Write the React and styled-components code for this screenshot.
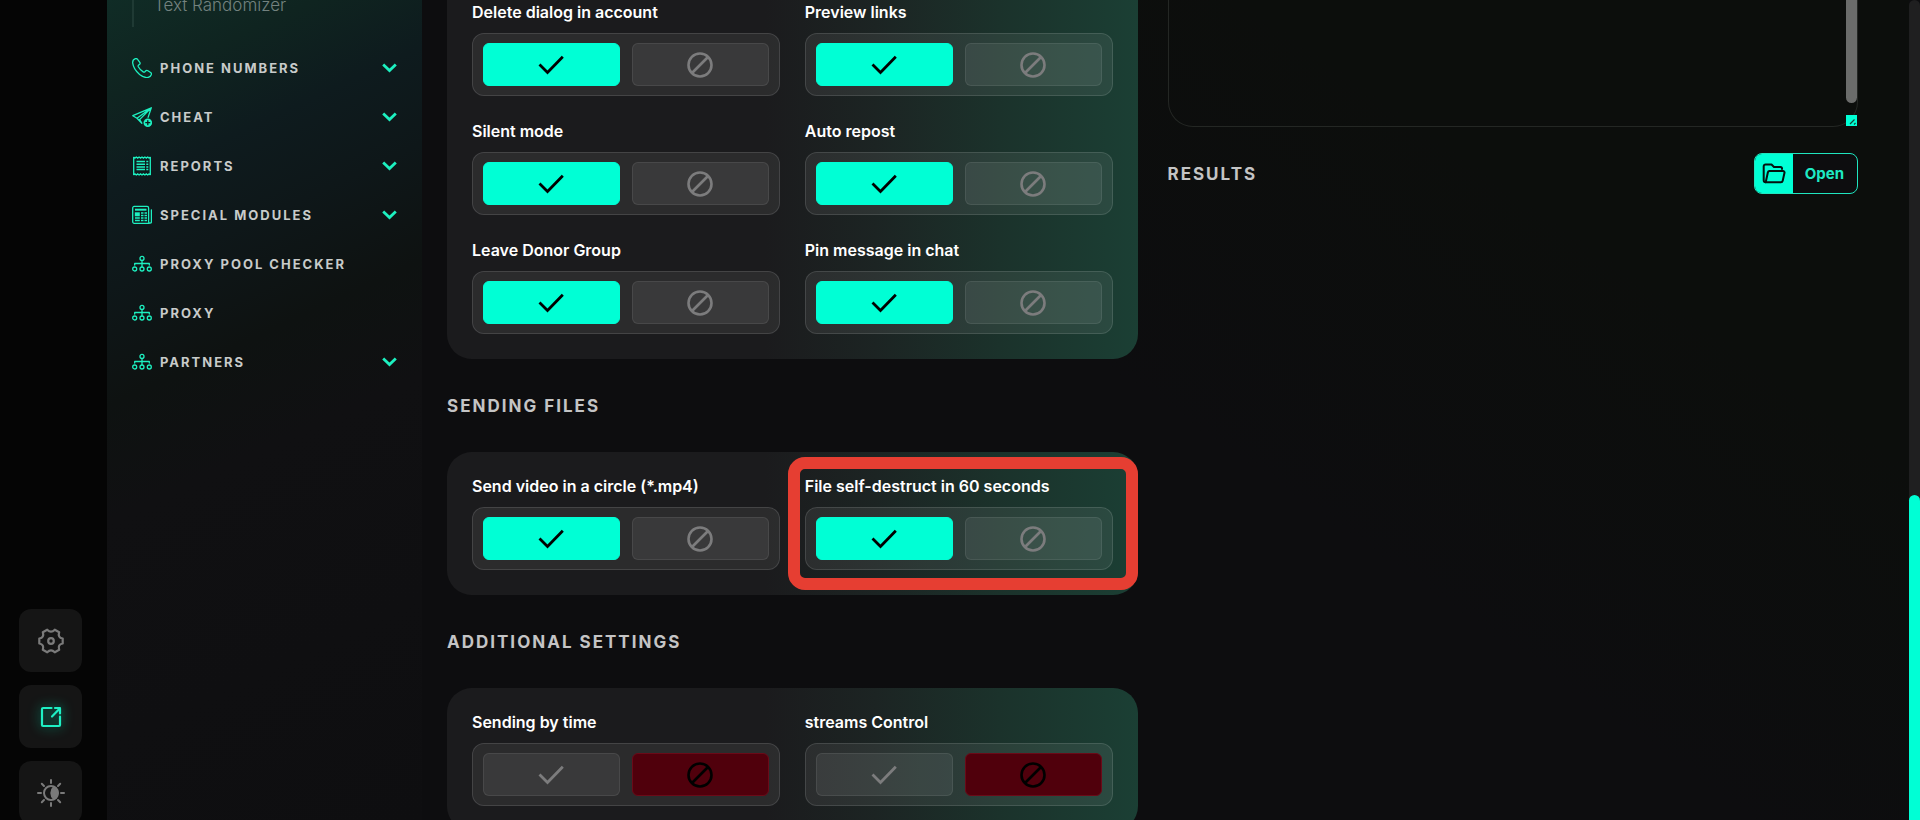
import React, { useState } from 'react'
import styled, { createGlobalStyle, css } from 'styled-components'

const GlobalStyle = createGlobalStyle`
    * {
        box-sizing: border-box;
    }
    body {
        margin: 0;
        background: #0d0d0f;
        color: #ffffff;
        font-family: Inter, "Liberation Sans", sans-serif;
    }
    button, textarea {
        font-family: inherit;
    }
    button {
        cursor: pointer;
    }
`

const Page = styled.div`
    display: flex;
    height: 100vh;
    overflow: hidden;
    background: #0d0d0f;
`

const Rail = styled.nav`
    display: flex;
    flex-direction: column;
    align-items: center;
    gap: 13px;
    flex: 0 0 107px;
    padding: 609px 6px 0 0;
    background: #050505;
`

const RailButton = styled.button`
    display: flex;
    align-items: center;
    justify-content: center;
    flex: 0 0 63px;
    width: 63px;
    padding: 0;
    border: 0;
    border-radius: 12px;
    background: #151515;
    color: ${({ $active }) => ($active ? '#1ef0c4' : '#7a7a7a')};
    svg {
        filter: ${({ $active }) => ($active ? 'drop-shadow(0 0 6px #00a884)' : 'none')};
    }
`

const Sidebar = styled.aside`
    flex: 0 0 315px;
    background: linear-gradient(155deg, #102c26 0%, #0f2420 10%, #0e1b1e 20%, #0e1719 30%, #0e1211 42%, #101012 54%, #0e0e10 100%);
`

const SubMenu = styled.div`
    display: flex;
    height: 27px;
    margin-left: 25px;
    padding-left: 20px;
    border-left: 2px solid #1f3a34;
`

const SubLink = styled.a`
    margin-top: -5px;
    color: #73827f;
    font-size: 17px;
    font-weight: 300;
    line-height: 20px;
    text-decoration: none;
    white-space: nowrap;
`

const Menu = styled.ul`
    margin: 0;
    padding: 16px 25px 0;
    list-style: none;
`

const MenuItem = styled.button`
    display: flex;
    align-items: center;
    gap: 8px;
    width: 100%;
    height: 49px;
    padding: 0;
    border: 0;
    background: none;
    color: #c8cbca;
    font-size: 13px;
    font-weight: 700;
    letter-spacing: 2px;
    line-height: 20px;
    text-align: left;
    svg {
        flex: none;
        color: #1df0c0;
    }
    span {
        flex: 1;
        white-space: nowrap;
    }
`

const Main = styled.main`
    display: grid;
    grid-template-columns: 1fr 1fr;
    gap: 30px;
    flex: 1;
    padding: 0 51px 0 25px;
    background: linear-gradient(215deg, #0c0e0c 0%, #0c0e0c 25%, #0d0d0f 50%);
`

const Column = styled.div`
    min-width: 0;
`

const Heading = styled.h2`
    margin: 0;
    padding-top: 1px;
    color: #c4c4c5;
    font-size: 17px;
    font-weight: 700;
    letter-spacing: 2px;
    line-height: 92px;
`

const Panel = styled.section`
    display: grid;
    grid-template-columns: 1fr 1fr;
    gap: 26px 25px;
    padding: 25px;
    border-radius: 25px;
    background: linear-gradient(90deg, #1b1b1d 0%, #1b1b1d 46%, #1c2423 62%, #1b322b 80%, #1b3f34 100%);
    ${({ $cut }) => $cut && css`
        padding-top: 3px;
        border-top-left-radius: 0;
        border-top-right-radius: 0;
    `}
`

const Setting = styled.div`
    position: relative;
    min-width: 0;
`

const SettingLabel = styled.div`
    margin-bottom: 12px;
    font-size: 16px;
    font-weight: 600;
    line-height: 18px;
    white-space: nowrap;
`

const ToggleBox = styled.div`
    display: grid;
    grid-template-columns: 1fr 1fr;
    gap: 12px;
    height: 63px;
    padding: 9px 10px;
    border: 1px solid rgba(255, 255, 255, 0.12);
    border-radius: 12px;
    background: rgba(255, 255, 255, 0.07);
`

const ToggleButton = styled.button`
    display: flex;
    align-items: center;
    justify-content: center;
    padding: 0;
    border: 1px solid rgba(255, 255, 255, 0.08);
    border-radius: 6px;
    background: rgba(255, 255, 255, 0.07);
    color: #7c7c7d;
    ${({ $state }) => $state === 'yes' && css`
        border-color: #00ffd5;
        background: #00ffd5;
        color: #000000;
    `}
    ${({ $state }) => $state === 'no' && css`
        border-color: #6b0a18;
        background: #50000c;
        color: #000000;
    `}
`

const Marker = styled.div`
    position: absolute;
    inset: -20px -25px -20px -17px;
    border: 12px solid #e63e32;
    border-radius: 17px;
    pointer-events: none;
`

const LogWrap = styled.div`
    position: relative;
    height: 127px;
`

const Log = styled.textarea`
    display: block;
    width: 100%;
    height: 100%;
    padding: 20px;
    border: 1px solid #242724;
    border-top: 0;
    border-radius: 0 0 25px 25px;
    outline: 0;
    background: transparent;
    color: #ffffff;
    resize: none;
    overflow: hidden;
`

const LogThumb = styled.div`
    position: absolute;
    top: 0;
    right: 1px;
    width: 11px;
    height: 103px;
    border-radius: 0 0 6px 6px;
    background: #6b6c6b;
`

const LogGrip = styled.div`
    position: absolute;
    right: 1px;
    bottom: 1px;
    width: 11px;
    height: 11px;
    background: #00ffd5;
    svg {
        display: block;
    }
`

const Results = styled.div`
    display: flex;
    align-items: center;
    justify-content: space-between;
`

const OpenButton = styled.button`
    display: flex;
    align-items: stretch;
    height: 41px;
    padding: 0;
    border: 1px solid #1fe5bf;
    border-radius: 8px;
    overflow: hidden;
    background: #0d0d0f;
    color: #1deac4;
    font-size: 15px;
    font-weight: 700;
    span {
        padding: 0 13px 0 12px;
        line-height: 39px;
    }
`

const OpenIcon = styled.i`
    display: flex;
    align-items: center;
    justify-content: center;
    width: 38px;
    background: #00ffd5;
    color: #04110e;
`

const ScrollTrack = styled.div`
    display: flex;
    flex-direction: column;
    justify-content: flex-end;
    flex: 0 0 11px;
    border-radius: 6px 6px 0 0;
    background: #1f1f20;
`

const ScrollThumb = styled.div`
    height: 325px;
    border-radius: 6px 6px 0 0;
    background: #00ffd5;
`

const stroke = { fill: 'none', stroke: 'currentColor', strokeLinecap: 'round', strokeLinejoin: 'round' }

const PhoneIcon = () => (
    <svg width="20" height="20" viewBox="0 0 20 20" strokeWidth="1.3" {...stroke}>
        <path d="M3.4.7C1.6 1.4.4 2.9.7 5.2 1.3 9.2 4 13.5 7.6 16.4c3 2.3 6.2 3.6 8.6 3 1.6-.4 2.8-1.5 3.2-2.9.2-.8-.1-1.5-.8-2l-2.7-1.8c-.8-.5-1.7-.4-2.3.3l-.7.8c-.5.5-1.1.5-1.7.1-2-1.3-3.7-3.1-4.9-5.2-.3-.6-.2-1.2.3-1.6l.8-.6c.7-.5.9-1.4.4-2.2L5.6 1.4C5.1.6 4.2.4 3.4.7z" />
    </svg>
)

const CheatIcon = () => (
    <svg width="20" height="20" viewBox="0 0 20 20" strokeWidth="1.3" {...stroke}>
        <path d="M19.3.8.8 8.7l4.2 2.6L19.3.8zM5 11.3l4.8 4.9M19.3.8 7.6 12.6M19.3.8l-3.2 9.6M7.6 12.6l2.2 3.6" />
        <circle cx="15.8" cy="15.7" r="4.3" fill="currentColor" stroke="none" />
        <path d="M15.8 13.7v4M13.8 15.7h4" stroke="#0f1a1c" />
    </svg>
)

const ReportsIcon = () => (
    <svg width="20" height="20" viewBox="0 0 20 20" fill="none" stroke="currentColor" strokeWidth="1.3">
        <path d="M1.7 1v18M18.3 1v18" />
        <path d="M1.5 1l1.4 1.1L4.3 1l1.4 1.1L7.1 1l1.5 1.1L10 1l1.4 1.1L12.9 1l1.4 1.1L15.7 1l1.4 1.1L18.5 1M1.5 19l1.4-1.1L4.3 19l1.4-1.1L7.1 19l1.5-1.1L10 19l1.4-1.1 1.5 1.1 1.4-1.1 1.4 1.1 1.4-1.1 1.4 1.1" />
        <path d="M4.5 5.5H13M4.5 8.2H13M4.5 10.9H13M4.5 13.6H13M14.3 5.5h2M14.3 8.2h2M14.3 10.9h2M14.3 13.6h2" strokeWidth="1.5" />
    </svg>
)

const NewsIcon = () => (
    <svg width="20" height="20" viewBox="0 0 20 20" strokeWidth="1.3" {...stroke}>
        <path d="M17.2 18.3H2.2a1.5 1.5 0 0 1-1.5-1.5V2.9a1.5 1.5 0 0 1 1.5-1.5h12.9a1.5 1.5 0 0 1 1.5 1.5v13.9a1.4 1.4 0 0 0 2.8 0V4.8" />
        <path d="M3 4.7h11.5" strokeWidth="2" strokeLinecap="butt" />
        <path d="M2.8 7.3h5v4h-5z" fill="currentColor" stroke="none" />
        <path d="M9 8h2.5M12.5 8H15M9 10.5h2.5M12.5 10.5H15M3 13h4.8M9 13h2.5M12.5 13H15M3 15.5h4.8M9 15.5h2.5M12.5 15.5H15" strokeWidth="1.4" strokeLinecap="butt" />
    </svg>
)

const NetworkIcon = () => (
    <svg width="20" height="20" viewBox="0 0 20 20" strokeWidth="1.3" {...stroke}>
        <circle cx="10" cy="4.4" r="2" />
        <circle cx="2.7" cy="15" r="2" />
        <circle cx="10" cy="15" r="2" />
        <circle cx="17.3" cy="15" r="2" />
        <path d="M10 6.4V13M2.7 11V9.5h14.6V11" />
    </svg>
)

const ChevronIcon = () => (
    <svg width="15" height="10" viewBox="0 0 15 10" strokeWidth="2.8" fill="none" stroke="currentColor">
        <path d="M1.2 1.5 7.5 7.6 13.8 1.5" />
    </svg>
)

const CheckIcon = () => (
    <svg width="26" height="20" viewBox="0 0 26 20" strokeWidth="2.8" fill="none" stroke="currentColor">
        <path d="M1.5 9.5 9.5 17.5 24.8 1.7" />
    </svg>
)

const BanIcon = () => (
    <svg width="26" height="26" viewBox="0 0 26 26" strokeWidth="2.6" fill="none" stroke="currentColor">
        <circle cx="13" cy="13" r="11.5" />
        <path d="M5 21 21 5" />
    </svg>
)

const GearIcon = () => (
    <svg width="26" height="26" viewBox="0 0 26 26" strokeWidth="2.2" {...stroke}>
        <path d="M24.7 10.5V15.5Q19.5 16.5 21.2 21.8L16.8 24.3Q13 20.3 9.2 24.3L4.8 21.8Q6.5 16.5 1.3 15.5V10.5Q6.5 9.5 4.8 4.2L9.2 1.7Q13 5.7 16.8 1.7L21.2 4.2Q19.5 9.5 24.7 10.5Z" />
        <circle cx="13" cy="13" r="2.8" />
    </svg>
)

const ExternalIcon = () => (
    <svg width="22" height="22" viewBox="0 0 22 22" strokeWidth="2.2" {...stroke}>
        <path d="M11.5 2H3a1 1 0 0 0-1 1v16a1 1 0 0 0 1 1h16a1 1 0 0 0 1-1v-8.5M12 10.5 20 2.3M15 2H20v5.5" />
    </svg>
)

const SunIcon = () => (
    <svg width="28" height="28" viewBox="0 0 28 28" strokeWidth="2" {...stroke}>
        <circle cx="14" cy="14" r="7" />
        <path d="M17 8a7 7 0 0 1 0 12 8 8 0 0 1 0-12z" fill="currentColor" />
        <path d="M14 1v3M14 24v3M1 14h3M24 14h3M4.8 4.8l2.2 2.2M21 21l2.2 2.2M4.8 23.2 7 21M21 7l2.2-2.2" />
    </svg>
)

const FolderIcon = () => (
    <svg width="24" height="22" viewBox="0 0 24 22" strokeWidth="2" {...stroke}>
        <path d="M20 6V5.5a1.5 1.5 0 0 0-1.5-1.5H12L9.5 1.5h-6A1.8 1.8 0 0 0 1.7 3.3v13.9a2 2 0 0 0 2 2" />
        <path d="M7.5 8H21a1.5 1.5 0 0 1 1.5 1.8l-1.8 8a1.8 1.8 0 0 1-1.8 1.4H3.7l2.2-9.9A1.7 1.7 0 0 1 7.5 8z" />
    </svg>
)

const menu = [
    { title: 'PHONE NUMBERS', icon: PhoneIcon, open: true },
    { title: 'CHEAT', icon: CheatIcon, open: true },
    { title: 'REPORTS', icon: ReportsIcon, open: true },
    { title: 'SPECIAL MODULES', icon: NewsIcon, open: true },
    { title: 'PROXY POOL CHECKER', icon: NetworkIcon },
    { title: 'PROXY', icon: NetworkIcon },
    { title: 'PARTNERS', icon: NetworkIcon, open: true },
]

const Toggle = ({ id, label, initial = true, marked }) => {
    const [value, setValue] = useState(initial)
    return (
        <Setting>
            <SettingLabel id={id}>{label}</SettingLabel>
            <ToggleBox role="group" aria-labelledby={id}>
                <ToggleButton
                    type="button"
                    aria-label="Yes"
                    aria-pressed={value}
                    $state={value ? 'yes' : 'idle'}
                    onClick={() => setValue(true)}
                >
                    <CheckIcon />
                </ToggleButton>
                <ToggleButton
                    type="button"
                    aria-label="No"
                    aria-pressed={!value}
                    $state={value ? 'idle' : 'no'}
                    onClick={() => setValue(false)}
                >
                    <BanIcon />
                </ToggleButton>
            </ToggleBox>
            {marked && <Marker />}
        </Setting>
    )
}

const App = () => {
    return (
        <React.Fragment>
            <GlobalStyle />
            <Page>
                <Rail>
                    <RailButton type="button" aria-label="Settings"><GearIcon /></RailButton>
                    <RailButton type="button" aria-label="Open in window" $active><ExternalIcon /></RailButton>
                    <RailButton type="button" aria-label="Theme"><SunIcon /></RailButton>
                </Rail>
                <Sidebar>
                    <SubMenu>
                        <SubLink href="#randomizer">Text Randomizer</SubLink>
                    </SubMenu>
                    <Menu>
                        {menu.map(({ title, icon: Icon, open }) => (
                            <li key={title}>
                                <MenuItem type="button">
                                    <Icon />
                                    <span>{title}</span>
                                    {open && <ChevronIcon />}
                                </MenuItem>
                            </li>
                        ))}
                    </Menu>
                </Sidebar>
                <Main>
                    <Column>
                        <Panel $cut>
                            <Toggle id="delete-dialog" label="Delete dialog in account" />
                            <Toggle id="preview-links" label="Preview links" />
                            <Toggle id="silent-mode" label="Silent mode" />
                            <Toggle id="auto-repost" label="Auto repost" />
                            <Toggle id="leave-donor" label="Leave Donor Group" />
                            <Toggle id="pin-message" label="Pin message in chat" />
                        </Panel>
                        <Heading>SENDING FILES</Heading>
                        <Panel>
                            <Toggle id="send-video" label="Send video in a circle (*.mp4)" />
                            <Toggle id="self-destruct" label="File self-destruct in 60 seconds" marked />
                        </Panel>
                        <Heading>ADDITIONAL SETTINGS</Heading>
                        <Panel>
                            <Toggle id="by-time" label="Sending by time" initial={false} />
                            <Toggle id="streams" label="streams Control" initial={false} />
                        </Panel>
                    </Column>
                    <Column>
                        <LogWrap>
                            <Log aria-label="Log" readOnly />
                            <LogThumb />
                            <LogGrip>
                                <svg width="11" height="11" viewBox="0 0 11 11" stroke="#12443a" strokeWidth="1.2">
                                    <path d="M4 9 8.5 4.5M8 9.5 9.5 8" />
                                </svg>
                            </LogGrip>
                        </LogWrap>
                        <Results>
                            <Heading>RESULTS</Heading>
                            <OpenButton type="button">
                                <OpenIcon><FolderIcon /></OpenIcon>
                                <span>Open</span>
                            </OpenButton>
                        </Results>
                    </Column>
                </Main>
                <ScrollTrack>
                    <ScrollThumb />
                </ScrollTrack>
            </Page>
        </React.Fragment>
    )
}

export default App
